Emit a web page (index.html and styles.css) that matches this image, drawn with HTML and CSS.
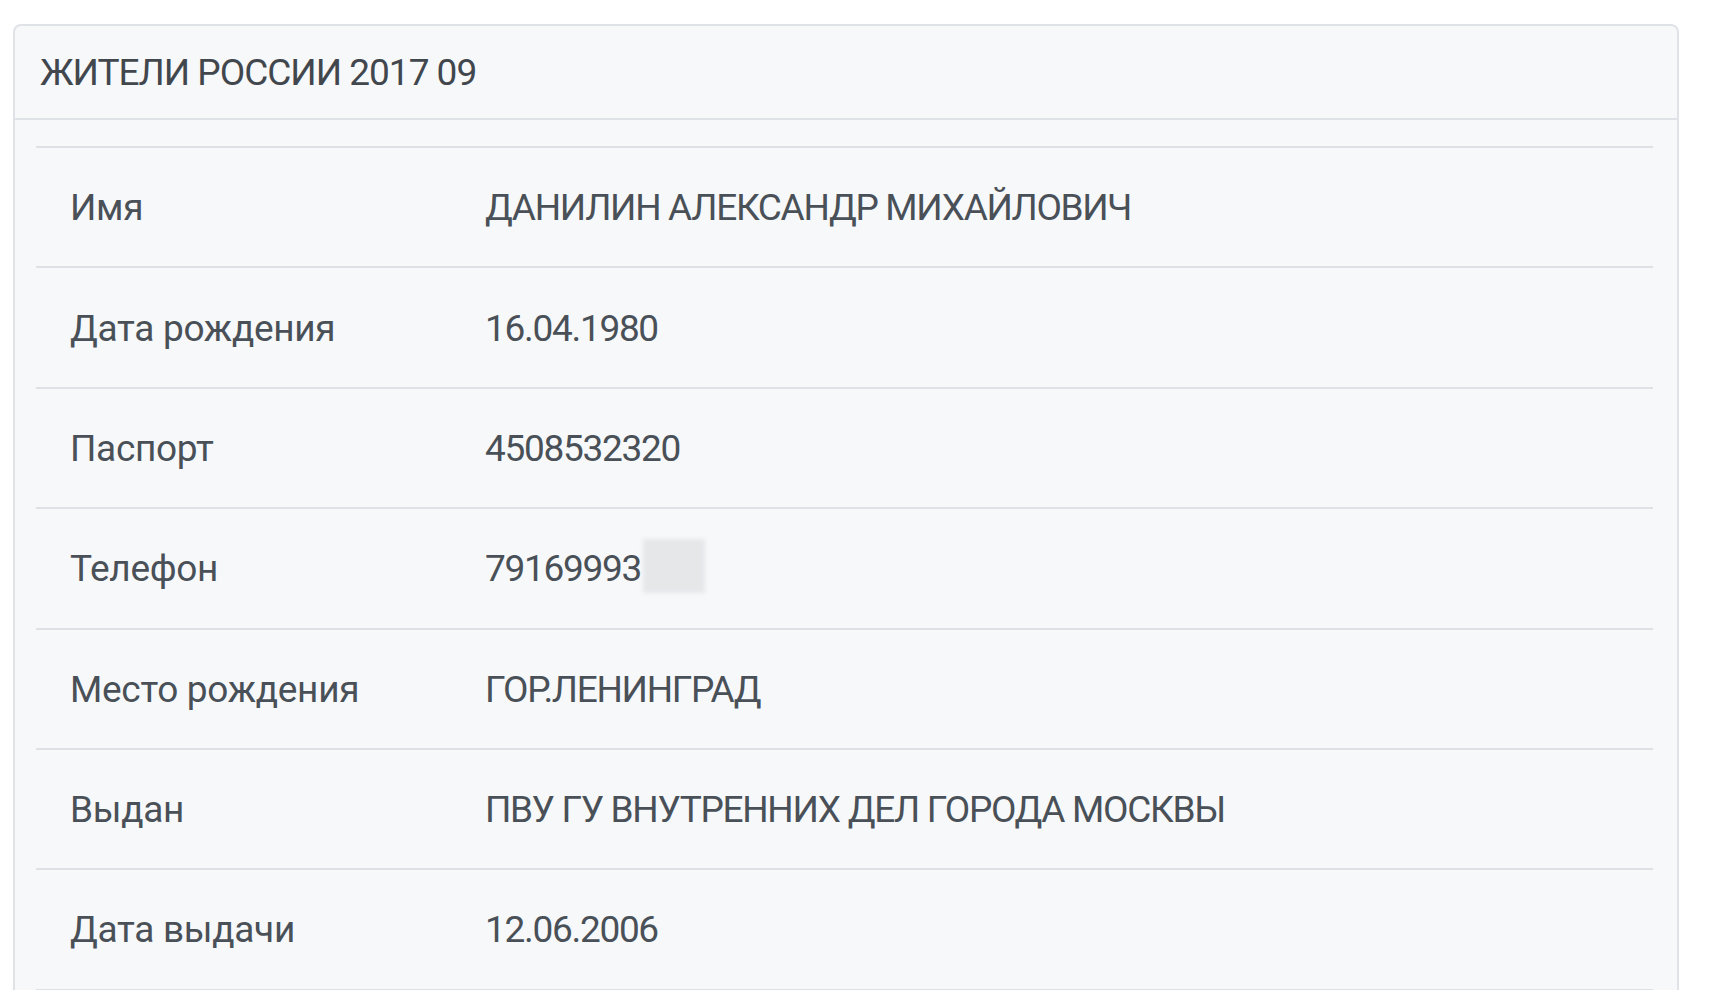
FILE: index.html
```html
<!DOCTYPE html>
<html lang="ru">
<head>
<meta charset="utf-8">
<title>ЖИТЕЛИ РОССИИ 2017 09</title>
<link rel="stylesheet" href="styles.css">
</head>
<body>
<div class="page">
  <div class="card">
    <div class="card-header">ЖИТЕЛИ РОССИИ 2017 09</div>
    <div class="card-body">
      <table class="info">
        <tbody>
          <tr><td class="label">Имя</td><td class="value">ДАНИЛИН АЛЕКСАНДР МИХАЙЛОВИЧ</td></tr>
          <tr><td class="label">Дата рождения</td><td class="value">16.04.1980</td></tr>
          <tr><td class="label">Паспорт</td><td class="value">4508532320</td></tr>
          <tr><td class="label">Телефон</td><td class="value"><span class="phone">79169993<span class="blur"></span></span></td></tr>
          <tr><td class="label">Место рождения</td><td class="value">ГОР.ЛЕНИНГРАД</td></tr>
          <tr><td class="label">Выдан</td><td class="value">ПВУ ГУ ВНУТРЕННИХ ДЕЛ ГОРОДА МОСКВЫ</td></tr>
          <tr><td class="label">Дата выдачи</td><td class="value">12.06.2006</td></tr>
          <tr><td class="label">&nbsp;</td><td class="value">&nbsp;</td></tr>
        </tbody>
      </table>
    </div>
  </div>
</div>
</body>
</html>
```
FILE: styles.css
```css
html, body {
  margin: 0;
  padding: 0;
  background: #ffffff;
}
body {
  font-family: Roboto, "Noto Sans", sans-serif;
  color: #495057;
}
.page {
  height: 990px;
  overflow: hidden;
  padding: 24px 53px 0 13px;
  box-sizing: border-box;
}
.card {
  background: #f7f8fa;
  border: 2px solid #dfe2e6;
  border-radius: 8px;
  min-height: 1200px;
}
.card-header {
  font-size: 37px;
  line-height: 60px;
  letter-spacing: -1px;
  padding: 17px 22px 15px 25px;
  border-bottom: 2px solid #dfe2e6;
  color: #41474d;
}
.card-body {
  padding: 26px 24px 0 21px;
}
.info {
  width: 100%;
  border-collapse: collapse;
  font-size: 37px;
  line-height: 60px;
}
.info td {
  border-top: 2px solid #dee2e6;
  padding: 30.2px 26px 28.2px;
  vertical-align: top;
  white-space: nowrap;
}
.info td.label {
  padding-left: 34px;
  width: 363px;
  letter-spacing: -0.3px;
}
.info td.value {
  letter-spacing: -1.3px;
}
.phone {
  position: relative;
  display: inline-block;
}
.blur {
  position: absolute;
  left: 100%;
  top: 0;
  margin-left: 2px;
  width: 62px;
  height: 54px;
  background: #e6e7e9;
  filter: blur(2px);
}
```
